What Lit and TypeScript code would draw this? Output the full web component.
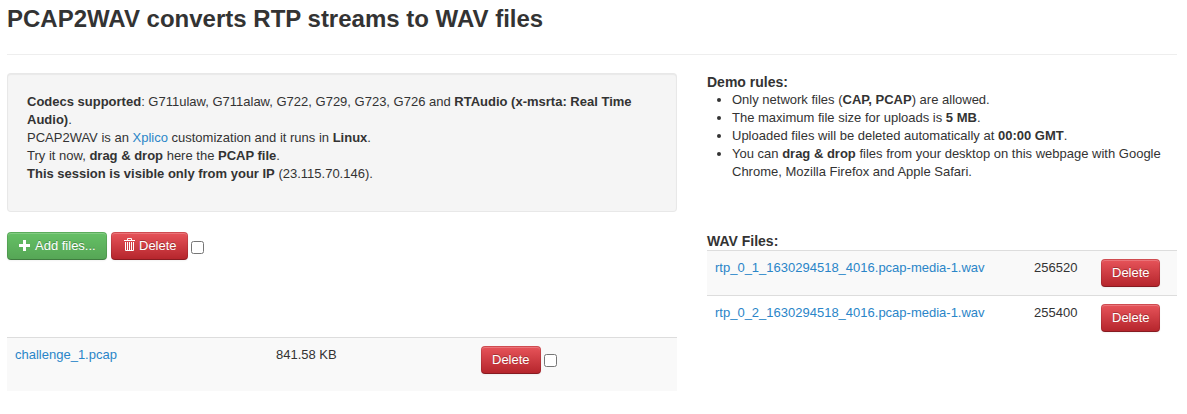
import { LitElement, html, css } from "lit";
import { customElement } from "lit/decorators.js";

const wavFiles = [
  { name: "rtp_0_1_1630294518_4016.pcap-media-1.wav", size: "256520" },
  { name: "rtp_0_2_1630294518_4016.pcap-media-1.wav", size: "255400" },
];

@customElement("app-root")
export class AppRoot extends LitElement {
  static styles = css`
    :host {
      display: block;
      box-sizing: border-box;
      height: 414px;
      padding: 0 10px 0 7px;
      overflow: hidden;
      background: #fff;
      color: #333;
      font: 13px/18px "Liberation Sans", Arial, sans-serif;
    }
    h1 {
      margin: 0;
      padding: 1px 0 17px;
      border-bottom: 1px solid #eee;
      font-size: 24px;
      line-height: 36px;
    }
    h2 {
      margin: 0;
      font-size: 14px;
      line-height: 18px;
    }
    .columns {
      display: grid;
      grid-template-columns: 670px 470px;
      column-gap: 30px;
      padding-top: 18px;
    }
    .well {
      box-sizing: border-box;
      height: 139px;
      padding: 19px;
      background: #f5f5f5;
      border: 1px solid rgba(0, 0, 0, 0.05);
      border-radius: 4px;
      box-shadow: inset 0 1px 1px rgba(0, 0, 0, 0.05);
    }
    p { margin: 0; }
    a { color: #2a85c8; text-decoration: none; }
    .actions {
      display: flex;
      gap: 4px;
      margin-top: 20px;
      height: 105px;
    }
    .btn {
      box-sizing: border-box;
      display: inline-flex;
      align-items: center;
      height: 28px;
      margin: 0;
      padding: 0 10px 1px;
      border: 1px solid;
      border-color: rgba(0, 0, 0, 0.1) rgba(0, 0, 0, 0.1) rgba(0, 0, 0, 0.25);
      border-radius: 4px;
      color: #fff;
      font: inherit;
      text-shadow: 0 -1px 0 rgba(0, 0, 0, 0.25);
      box-shadow: inset 0 1px 0 rgba(255, 255, 255, 0.2), 0 1px 2px rgba(0, 0, 0, 0.05);
      white-space: nowrap;
    }
    .success {
      width: 100px;
      background: linear-gradient(#66c166, #55a555) border-box;
    }
    .danger { background: linear-gradient(#e8555b, #b4242b) border-box; }
    .wav .btn { width: 59px; }
    .icon {
      width: 14px;
      height: 14px;
      margin: 0 3px 1px 0;
      flex: none;
    }
    .check {
      width: 13px;
      height: 13px;
      margin: 9px 0 0 -1px;
      flex: none;
    }
    .pcap .check { margin-top: 8px; }
    .rules { height: 159px; }
    ul { margin: 0; padding: 0 0 0 25px; }
    .row {
      display: grid;
      box-sizing: border-box;
      padding: 8px;
      border-top: 1px solid #ddd;
      align-items: start;
    }
    .odd { background: #f9f9f9; }
    .wav { grid-template-columns: 319px 67px auto; height: 45px; }
    .pcap { grid-template-columns: 261px 205px auto; height: 54px; }
    .cell { display: flex; gap: 4px; }
  `;

  render() {
    return html`
      <h1>PCAP2WAV converts RTP streams to WAV files</h1>
      <div class="columns">
        <main>
          <div class="well">
            <p>
              <b>Codecs supported</b>: G711ulaw, G711alaw, G722, G729, G723, G726 and
              <b>RTAudio (x-msrta: Real Time Audio)</b>.<br />
              PCAP2WAV is an <a>Xplico</a> customization and it runs in <b>Linux</b>.<br />
              Try it now, <b>drag &amp; drop</b> here the <b>PCAP file</b>.<br />
              <b>This session is visible only from your IP</b> (23.115.70.146).
            </p>
          </div>
          <div class="actions">
            <button class="btn success">
              <svg class="icon" viewBox="0 0 14 14" fill="#fff"><path d="M5 2h3v4h4v3H8v4H5V9H1V6h4z" /></svg>Add files...
            </button>
            <button class="btn danger">
              <svg class="icon" viewBox="0 0 14 14" fill="none" stroke="#fff">
                <path d="M2 2.5h11M5.5 2V.5h4V2M3.5 4v8.5h8V4M5.5 4v8M7.5 4v8M9.5 4v8" />
              </svg>Delete
            </button>
            <input class="check" type="checkbox" aria-label="Select all" />
          </div>
          <div class="row odd pcap">
            <a>challenge_1.pcap</a>
            <span>841.58 KB</span>
            <div class="cell">
              <button class="btn danger">Delete</button>
              <input class="check" type="checkbox" aria-label="Select file" />
            </div>
          </div>
        </main>
        <aside>
          <div class="rules">
            <h2>Demo rules:</h2>
            <ul>
              <li>Only network files (<b>CAP, PCAP</b>) are allowed.</li>
              <li>The maximum file size for uploads is <b>5 MB</b>.</li>
              <li>Uploaded files will be deleted automatically at <b>00:00 GMT</b>.</li>
              <li>
                You can <b>drag &amp; drop</b> files from your desktop on this webpage with Google
                Chrome, Mozilla Firefox and Apple Safari.
              </li>
            </ul>
          </div>
          <h2>WAV Files:</h2>
          ${wavFiles.map(
            (f, i) => html`<div class="row wav ${i % 2 ? "" : "odd"}">
              <a>${f.name}</a>
              <span>${f.size}</span>
              <div class="cell"><button class="btn danger">Delete</button></div>
            </div>`
          )}
        </aside>
      </div>
    `;
  }
}
